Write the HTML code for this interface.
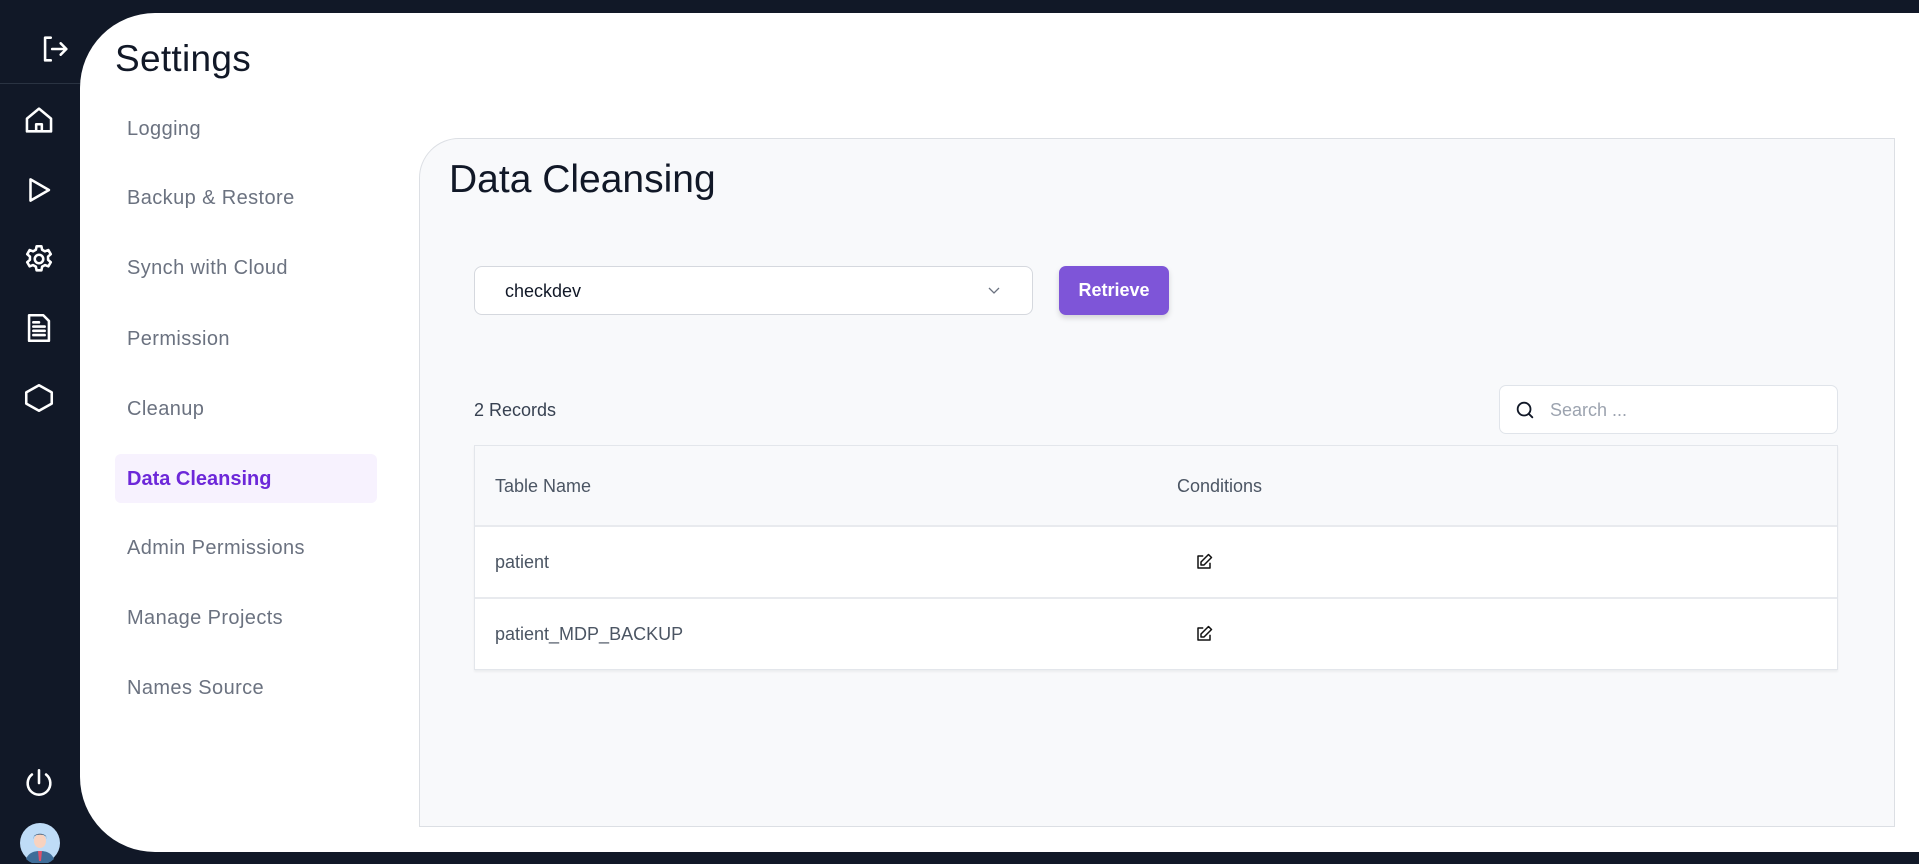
<!DOCTYPE html>
<html><head><meta charset="utf-8"><style>
*{box-sizing:border-box;margin:0;padding:0}
body{width:1919px;height:864px;background:#111827;font-family:"Liberation Sans",sans-serif;position:relative;overflow:hidden}
.panel{position:absolute;left:80px;top:13px;width:1839px;height:839px;background:#fff;border-radius:75px 0 0 75px}
.ic{position:absolute;left:22px;width:34px;height:34px}
.ic svg{width:34px;height:34px;fill:none;stroke:#fff;stroke-width:1.8;stroke-linecap:round;stroke-linejoin:round}
.sep{position:absolute;left:0;top:83px;width:80px;height:1px;background:#2a3342}
h1{position:absolute;left:115px;top:38px;font-size:37px;font-weight:400;color:#111827;letter-spacing:.3px}
.mi{position:absolute;left:127px;font-size:20px;color:#6b7280;line-height:24px;letter-spacing:.4px}
.act{position:absolute;left:115px;top:454px;width:262px;height:49px;background:#f7f2fe;border-radius:6px}
.card{position:absolute;left:419px;top:138px;width:1476px;height:689px;background:#f8f9fb;border:1px solid #dcdfe4;border-radius:40px 0 0 0}
h2{position:absolute;left:449px;top:158px;font-size:39px;font-weight:400;color:#111827}
.sel{position:absolute;left:474px;top:266px;width:559px;height:49px;background:#fff;border:1px solid #d5d8de;border-radius:8px}
.btn{position:absolute;left:1059px;top:266px;width:110px;height:49px;background:#7e55d8;border-radius:7px;color:#fff;font-weight:bold;font-size:18px;text-align:center;line-height:49px;box-shadow:0 3px 6px rgba(0,0,0,.15)}
.srch{position:absolute;left:1499px;top:385px;width:339px;height:49px;background:#fff;border:1px solid #e0e4ea;border-radius:7px}
.tbl{position:absolute;left:474px;top:445px;width:1364px;height:225px;background:#fff;border:1px solid #e3e6eb;box-shadow:0 2px 2px rgba(0,0,0,.05)}
.th{position:absolute;left:0;top:0;width:100%;height:81px;background:#f8f9fb;border-bottom:2px solid #e8eaee}
.row2{position:absolute;left:0;top:151px;width:100%;height:2px;background:#e8eaee}
.t{position:absolute;font-size:18px;color:#4b5563}
.ed{position:absolute;left:720px;width:18px;height:18px}
</style></head><body>
<div class="panel"></div>
<div class="ic" style="top:32px;left:38px"><svg viewBox="0 0 24 24"><path d="M9 4H5v16h4M10 12h10M16 8l4 4-4 4"/></svg></div>
<div class="sep"></div>
<div class="ic" style="top:103px"><svg viewBox="0 0 24 24"><path d="M3.5 11l8.5-7 8.5 7v9h-17z M10 20v-5h4v5"/></svg></div>
<div class="ic" style="top:173px"><svg viewBox="0 0 24 24"><path d="M6 4.5l13 7.5-13 7.5z"/></svg></div>
<div class="ic" style="top:242px"><svg viewBox="0 0 24 24"><circle cx="12" cy="12" r="3"/><path d="M10.3 3h3.4l.5 2.5 2 1.1 2.4-.9 1.7 2.9-1.9 1.7v2.3l1.9 1.7-1.7 2.9-2.4-.9-2 1.1-.5 2.6h-3.4l-.5-2.6-2-1.1-2.4.9-1.7-2.9 1.9-1.7v-2.3L3.7 8.6l1.7-2.9 2.4.9 2-1.1z"/></svg></div>
<div class="ic" style="top:311px"><svg viewBox="0 0 24 24"><path d="M5 3h10l4 4v14H5z M8 11h8M8 14h8M8 17h8M8 8h4"/></svg></div>
<div class="ic" style="top:381px"><svg viewBox="0 0 24 24"><path d="M12 3l9 5v8l-9 5-9-5V8z"/></svg></div>
<div class="ic" style="top:766px"><svg viewBox="0 0 24 24"><path d="M12 3v9M7 6a8 8 0 1 0 10 0"/></svg></div>
<svg style="position:absolute;left:20px;top:823px" width="40" height="40" viewBox="0 0 40 40"><circle cx="20" cy="20" r="20" fill="#bfdcf7"/><path d="M6 36c3-7 9-8 14-8s11 1 14 8a20 20 0 0 1-28 0z" fill="#3f6d99"/><path d="M18 28h4l-1 10h-2z" fill="#e0526a"/><ellipse cx="20" cy="18" rx="6" ry="7" fill="#f8d2bf"/><path d="M13 16c0-6 14-6 14 0l-1-3c-3-3-9-3-12 0z" fill="#2d4a6a"/></svg>
<h1>Settings</h1>
<div class="act"></div>
<div class="mi" style="top:117px">Logging</div>
<div class="mi" style="top:186px">Backup &amp; Restore</div>
<div class="mi" style="top:256px">Synch with Cloud</div>
<div class="mi" style="top:327px">Permission</div>
<div class="mi" style="top:397px">Cleanup</div>
<div class="mi" style="top:467px;color:#6d28d9;font-weight:bold;letter-spacing:0">Data Cleansing</div>
<div class="mi" style="top:536px">Admin Permissions</div>
<div class="mi" style="top:606px">Manage Projects</div>
<div class="mi" style="top:676px">Names Source</div>
<div class="card"></div>
<h2>Data Cleansing</h2>
<div class="sel"><span style="position:absolute;left:30px;top:14px;font-size:18px;color:#111827">checkdev</span><svg style="position:absolute;left:513px;top:19px" width="12" height="10" viewBox="0 0 12 10"><path d="M1 2l5 5 5-5" fill="none" stroke="#6b7280" stroke-width="1.3"/></svg></div>
<div class="btn">Retrieve</div>
<div class="t" style="left:474px;top:400px;color:#374151">2 Records</div>
<div class="srch"><svg style="position:absolute;left:14px;top:13px" width="22" height="22" viewBox="0 0 24 24"><circle cx="11" cy="11" r="7" fill="none" stroke="#111827" stroke-width="2"/><path d="M16 16l4 4" stroke="#111827" stroke-width="2" stroke-linecap="round"/></svg><span style="position:absolute;left:50px;top:14px;font-size:18px;color:#9ca3af">Search ...</span></div>
<div class="tbl">
<div class="th"></div>
<div class="row2"></div>
<div class="t" style="left:20px;top:30px">Table Name</div>
<div class="t" style="left:702px;top:30px">Conditions</div>
<div class="t" style="left:20px;top:106px">patient</div>
<div class="t" style="left:20px;top:178px">patient_MDP_BACKUP</div>
<svg class="ed" style="top:107px" viewBox="0 0 24 24"><path d="M11 4H4v16h16v-7M18 2l4 4-10 10H8v-4z" fill="none" stroke="#111" stroke-width="2" stroke-linejoin="round"/></svg>
<svg class="ed" style="top:179px" viewBox="0 0 24 24"><path d="M11 4H4v16h16v-7M18 2l4 4-10 10H8v-4z" fill="none" stroke="#111" stroke-width="2" stroke-linejoin="round"/></svg>
</div>
</body></html>
